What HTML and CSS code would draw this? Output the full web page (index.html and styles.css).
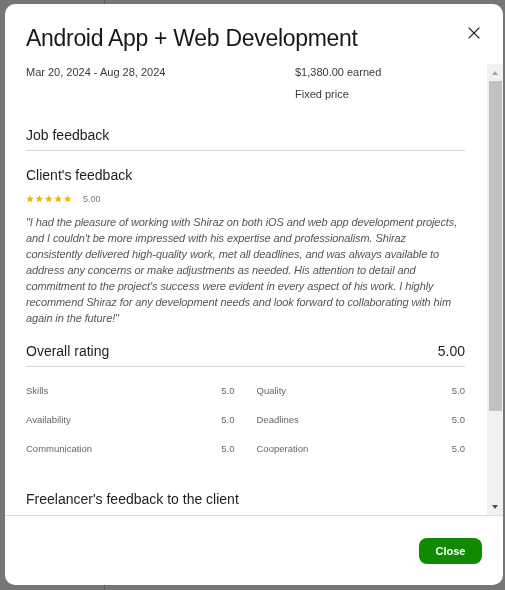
FILE: index.html
```html
<!DOCTYPE html>
<html lang="en">
<head>
<meta charset="utf-8">
<title>Job feedback</title>
<link rel="stylesheet" href="styles.css">
</head>
<body>
<div class="page">
  <aside class="page-side"></aside>
  <main class="page-main"></main>
</div>
<div class="overlay">
  <section class="modal" role="dialog" aria-labelledby="modal-title">
    <header class="modal-head">
      <h2 id="modal-title" class="modal-title">Android App + Web Development</h2>
      <button class="icon-btn" type="button" aria-label="Close">
        <svg viewBox="0 0 12 12" width="12" height="12" aria-hidden="true"><path d="M0.6 0.6 L11.4 11.4 M11.4 0.6 L0.6 11.4" stroke="#1f1f1f" stroke-width="1.3" fill="none"/></svg>
      </button>
    </header>
    <div class="modal-body">
      <div class="scroll-content">
        <div class="job-meta">
          <span class="meta-text">Mar 20, 2024 - Aug 28, 2024</span>
          <div class="meta-col">
            <span class="meta-text">$1,380.00 earned</span>
            <span class="meta-text">Fixed price</span>
          </div>
        </div>

        <h3 class="section-title ruled">Job feedback</h3>

        <h3 class="section-title client-title">Client's feedback</h3>
        <div class="stars-row">
          <svg class="stars" viewBox="0 0 46 8" width="46" height="8" aria-hidden="true">
            <g fill="#efb20c">
              <polygon points="4,0.1 5.03,2.68 7.8,2.86 5.66,4.64 6.35,7.34 4,5.85 1.65,7.34 2.34,4.64 0.2,2.86 2.97,2.68"/>
              <polygon transform="translate(9.4 0)" points="4,0.1 5.03,2.68 7.8,2.86 5.66,4.64 6.35,7.34 4,5.85 1.65,7.34 2.34,4.64 0.2,2.86 2.97,2.68"/>
              <polygon transform="translate(18.8 0)" points="4,0.1 5.03,2.68 7.8,2.86 5.66,4.64 6.35,7.34 4,5.85 1.65,7.34 2.34,4.64 0.2,2.86 2.97,2.68"/>
              <polygon transform="translate(28.2 0)" points="4,0.1 5.03,2.68 7.8,2.86 5.66,4.64 6.35,7.34 4,5.85 1.65,7.34 2.34,4.64 0.2,2.86 2.97,2.68"/>
              <polygon transform="translate(37.6 0)" points="4,0.1 5.03,2.68 7.8,2.86 5.66,4.64 6.35,7.34 4,5.85 1.65,7.34 2.34,4.64 0.2,2.86 2.97,2.68"/>
            </g>
          </svg>
          <span class="stars-score">5.00</span>
        </div>
        <p class="quote">"I had the pleasure of working with Shiraz on both iOS and web app development projects, and I couldn't be more impressed with his expertise and professionalism. Shiraz consistently delivered high-quality work, met all deadlines, and was always available to address any concerns or make adjustments as needed. His attention to detail and commitment to the project's success were evident in every aspect of his work. I highly recommend Shiraz for any development needs and look forward to collaborating with him again in the future!"</p>

        <div class="overall ruled">
          <h3 class="overall-label">Overall rating</h3>
          <span class="overall-score">5.00</span>
        </div>

        <dl class="ratings">
          <div class="rating"><dt>Skills</dt><dd>5.0</dd></div>
          <div class="rating"><dt>Quality</dt><dd>5.0</dd></div>
          <div class="rating"><dt>Availability</dt><dd>5.0</dd></div>
          <div class="rating"><dt>Deadlines</dt><dd>5.0</dd></div>
          <div class="rating"><dt>Communication</dt><dd>5.0</dd></div>
          <div class="rating"><dt>Cooperation</dt><dd>5.0</dd></div>
        </dl>

        <h3 class="section-title freelancer-title">Freelancer's feedback to the client</h3>
      </div>
      <div class="scrollbar" aria-hidden="true">
        <span class="sb-btn sb-up"></span>
        <div class="sb-track"><span class="sb-thumb"></span></div>
        <span class="sb-btn sb-down"></span>
      </div>
    </div>
    <footer class="modal-foot">
      <button class="btn-primary" type="button">Close</button>
    </footer>
  </section>
</div>
</body>
</html>
```
FILE: styles.css
```css
* { box-sizing: border-box; }

html, body {
  margin: 0;
  height: 100%;
}

body {
  font-family: "Liberation Sans", Arial, sans-serif;
  background: #767676;
  color: #222;
  overflow: hidden;
}

/* dimmed page behind the dialog */
.page {
  display: flex;
  height: 100vh;
}

.page-side {
  width: 105px;
  border-right: 1px solid #5d5d5d;
}

.page-main {
  flex: 1;
}

/* dialog */
.overlay {
  position: fixed;
  inset: 0;
  display: flex;
  padding: 4px 2px 5px 5px;
}

.modal {
  flex: 1;
  display: flex;
  flex-direction: column;
  background: #fff;
  border-radius: 10px;
  overflow: hidden;
}

.modal-head {
  height: 60px;
  flex: none;
  display: flex;
  justify-content: space-between;
  align-items: flex-start;
  padding: 20px 21px 0 21px;
}

.modal-title {
  margin: 0;
  font-size: 23px;
  line-height: 28px;
  font-weight: 400;
  letter-spacing: -0.3px;
  color: #181818;
}

.icon-btn {
  width: 16px;
  height: 16px;
  margin-top: 1px;
  padding: 2px;
  border: 0;
  background: none;
  display: flex;
}

.modal-body {
  flex: 1;
  min-height: 0;
  display: flex;
}

.scroll-content {
  flex: 1;
  min-width: 0;
  overflow: hidden;
  padding: 0 22px 0 21px;
}

/* scrollbar */
.scrollbar {
  width: 16px;
  flex: none;
  display: flex;
  flex-direction: column;
  background: #f1f1f1;
}

.sb-btn {
  height: 17px;
  flex: none;
  display: flex;
  align-items: center;
  justify-content: center;
}

.sb-up::before {
  content: "";
  border-left: 3.5px solid transparent;
  border-right: 3.5px solid transparent;
  border-bottom: 4px solid #a3a3a3;
}

.sb-down::before {
  content: "";
  border-left: 3.5px solid transparent;
  border-right: 3.5px solid transparent;
  border-top: 4px solid #505050;
}

.sb-track {
  flex: 1;
  padding: 0 1px 0 2px;
}

.sb-thumb {
  display: block;
  height: 330px;
  background: #c1c1c1;
}

/* meta */
.job-meta {
  display: grid;
  grid-template-columns: 269px 1fr;
}

.meta-col {
  display: flex;
  flex-direction: column;
  gap: 6px;
}

.meta-text {
  font-size: 11px;
  line-height: 16px;
  color: #3b3b3b;
}

/* sections */
.section-title {
  margin: 23px 0 0;
  font-size: 14px;
  line-height: 20px;
  font-weight: 400;
  color: #1e1e1e;
}

.ruled {
  padding-bottom: 5px;
  border-bottom: 1px solid #d9d9d9;
}

.client-title {
  margin-top: 14px;
}

.stars-row {
  display: flex;
  align-items: center;
  height: 14px;
  margin-top: 7px;
}

.stars {
  display: block;
}

.stars-score {
  margin-left: 11px;
  font-size: 9px;
  color: #7a7a7a;
}

.quote {
  margin: 7.5px 0 0;
  font-size: 11px;
  line-height: 16px;
  letter-spacing: -0.1px;
  font-style: italic;
  color: #555;
}

.overall {
  margin-top: 15.5px;
  display: flex;
  justify-content: space-between;
  align-items: center;
  font-size: 14px;
  line-height: 20px;
  color: #1e1e1e;
}

.overall-label {
  margin: 0;
  font-size: 14px;
  font-weight: 400;
}

.ratings {
  margin: 16.5px 0 0;
  display: grid;
  grid-template-columns: 1fr 1fr;
  gap: 15px 22px;
}

.rating {
  display: flex;
  justify-content: space-between;
  font-size: 9.5px;
  line-height: 14px;
  color: #666;
}

.rating dt,
.rating dd {
  margin: 0;
}

.freelancer-title {
  margin-top: 33.3px;
}

/* footer */
.modal-foot {
  height: 70px;
  flex: none;
  border-top: 1px solid #dcdcdc;
  display: flex;
  justify-content: flex-end;
  align-items: center;
  padding: 0 21px;
}

.btn-primary {
  width: 63px;
  height: 26px;
  border: 0;
  border-radius: 8px;
  background: #108a00;
  color: #fff;
  font-family: "Liberation Sans", Arial, sans-serif;
  font-size: 11px;
  font-weight: 700;
}
```
